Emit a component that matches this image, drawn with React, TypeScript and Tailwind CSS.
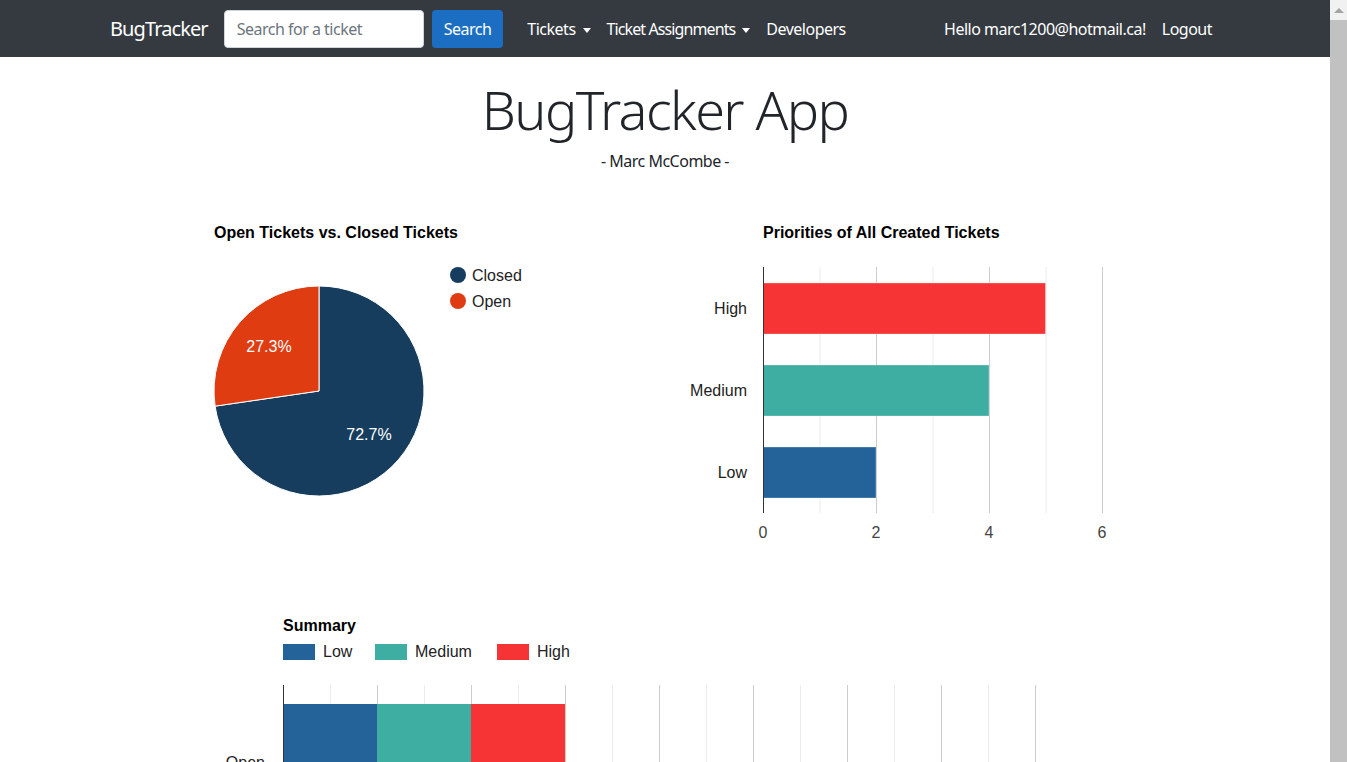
const sans = { fontFamily: '"Segoe UI", "Noto Sans", sans-serif' };

function Caret() {
  return <span className="ml-[7px] inline-block h-0 w-0 border-x-[4.5px] border-t-[5px] border-x-transparent border-t-white align-middle" />;
}

function NavBar() {
  return (
    <nav className="h-[57px] bg-[#343a40] text-white tracking-[-0.5px]" style={sans}>
      <div className="mx-auto flex h-full max-w-[1140px] items-center px-[15px]">
        <span className="mr-4 text-[20px] leading-[30px] tracking-[-0.9px]">BugTracker</span>
        <input
          className="h-[38px] w-[200px] rounded-[4px] border border-[#ced4da] bg-white px-3 text-[16px] text-[#495057] placeholder:text-[#6c757d]"
          placeholder="Search for a ticket"
        />
        <button className="ml-2 h-[38px] rounded-[4px] bg-[#1b6ec2] px-3 text-[16px] text-white">Search</button>
        <ul className="ml-4 flex items-center text-[16px]">
          <li className="px-2">Tickets<Caret /></li>
          <li className="px-2 tracking-[-0.9px]">Ticket Assignments<Caret /></li>
          <li className="px-2">Developers</li>
        </ul>
        <ul className="ml-auto flex items-center text-[16px]">
          <li className="px-2">Hello marc1200@hotmail.ca!</li>
          <li className="px-2">Logout</li>
        </ul>
      </div>
    </nav>
  );
}

const arial = { fontFamily: '"Liberation Sans", Arial, sans-serif' };

function PieChart() {
  const cx = 194, cy = 180, r = 105;
  const a = (261.7 * Math.PI) / 180;
  const px = cx + r * Math.sin(a);
  const py = cy - r * Math.cos(a);
  return (
    <svg width="525" height="330" style={arial}>
      <text x="89" y="27" fontSize="16" fontWeight="bold" fill="#000">Open Tickets vs. Closed Tickets</text>
      <path d={`M${cx} ${cy} L${cx} ${cy - r} A${r} ${r} 0 1 1 ${px} ${py} Z`} fill="#173d5e" stroke="#fff" strokeWidth="1" />
      <path d={`M${cx} ${cy} L${px} ${py} A${r} ${r} 0 0 1 ${cx} ${cy - r} Z`} fill="#e03c12" stroke="#fff" strokeWidth="1" />
      <text x="144" y="141" fontSize="16" fill="#fff" textAnchor="middle">27.3%</text>
      <text x="244" y="229" fontSize="16" fill="#fff" textAnchor="middle">72.7%</text>
      <circle cx="333" cy="64" r="8" fill="#173d5e" />
      <text x="347" y="70" fontSize="16" fill="#222">Closed</text>
      <circle cx="333" cy="90" r="8" fill="#e03c12" />
      <text x="347" y="96" fontSize="16" fill="#222">Open</text>
    </svg>
  );
}

function BarChart() {
  const x0 = 83, unit = 56.5;
  const bars = [
    { label: "High", v: 5, y: 72, c: "#f63335" },
    { label: "Medium", v: 4, y: 154, c: "#3eaea3" },
    { label: "Low", v: 2, y: 236, c: "#236399" },
  ];
  return (
    <svg width="525" height="330" style={arial}>
      <text x="83" y="27" fontSize="16" fontWeight="bold" fill="#000">Priorities of All Created Tickets</text>
      {[1, 2, 3, 4, 5, 6].map((i) => (
        <line key={i} x1={x0 + i * unit + 0.5} x2={x0 + i * unit + 0.5} y1="56" y2="302" stroke={i % 2 ? "#ebebeb" : "#cccccc"} />
      ))}
      {bars.map((b) => (
        <g key={b.label}>
          <rect x={x0} y={b.y} width={b.v * unit} height="51" fill={b.c} stroke="#fff" strokeOpacity="0.3" />
          <text x="67" y={b.y + 31} fontSize="16" fill="#222" textAnchor="end">{b.label}</text>
        </g>
      ))}
      <line x1={x0 + 0.5} x2={x0 + 0.5} y1="56" y2="302" stroke="#333" />
      {[0, 2, 4, 6].map((n) => (
        <text key={n} x={x0 + n * unit} y="327" fontSize="16" fill="#444" textAnchor="middle">{n}</text>
      ))}
    </svg>
  );
}

function SummaryChart() {
  const x0 = 173, unit = 47;
  const legend = [
    { label: "Low", x: 173, c: "#236399" },
    { label: "Medium", x: 265, c: "#3eaea3" },
    { label: "High", x: 387, c: "#f63335" },
  ];
  const segs = [
    { c: "#236399", w: 2 },
    { c: "#3eaea3", w: 2 },
    { c: "#f63335", w: 2 },
  ];
  let acc = 0;
  return (
    <svg width="1110" height="180" style={arial}>
      <text x="173" y="21" fontSize="16" fontWeight="bold" fill="#000">Summary</text>
      {legend.map((l) => (
        <g key={l.label}>
          <rect x={l.x} y="34" width="32" height="16" fill={l.c} />
          <text x={l.x + 40} y="47" fontSize="16" fill="#222">{l.label}</text>
        </g>
      ))}
      {Array.from({ length: 16 }, (_, i) => i + 1).map((i) => (
        <line key={i} x1={x0 + i * unit + 0.5} x2={x0 + i * unit + 0.5} y1="75" y2="180" stroke={i % 2 ? "#ebebeb" : "#cccccc"} />
      ))}
      {segs.map((s, i) => {
        const x = x0 + acc * unit;
        acc += s.w;
        return <rect key={i} x={x} y="94" width={s.w * unit} height="80" fill={s.c} />;
      })}
      <line x1={x0 + 0.5} x2={x0 + 0.5} y1="75" y2="180" stroke="#333" />
      <text x="155" y="158" fontSize="16" fill="#222" textAnchor="end">Open</text>
    </svg>
  );
}

function ScrollBar() {
  return (
    <div className="flex w-[17px] shrink-0 flex-col bg-[#f1f1f1]">
      <div className="flex h-[20px] items-center justify-center">
        <span className="h-0 w-0 border-x-[5px] border-b-[5px] border-x-transparent border-b-[#a3a3a3]" />
      </div>
      <div className="flex-1 bg-[#c1c1c1]" />
    </div>
  );
}

export default function App() {
  return (
    <div className="flex h-screen overflow-hidden bg-white">
      <div className="min-w-0 flex-1 overflow-hidden">
        <NavBar />
        <main className="mx-auto max-w-[1140px] px-[15px]">
          <div className="pt-[19px] text-center text-[#212529]" style={sans}>
            <h1 className="text-[54px] font-light leading-[67px] tracking-[-1.6px]">BugTracker App</h1>
            <p className="mt-[6px] text-[16px] leading-6 tracking-[-0.5px]">- Marc McCombe -</p>
          </div>
          <div className="mt-[38px] grid grid-cols-2">
            <div className="px-[15px]">
              <PieChart />
            </div>
            <div className="px-[15px]">
              <BarChart />
            </div>
          </div>
          <div className="mt-[69px]">
            <SummaryChart />
          </div>
        </main>
      </div>
      <ScrollBar />
    </div>
  );
}
